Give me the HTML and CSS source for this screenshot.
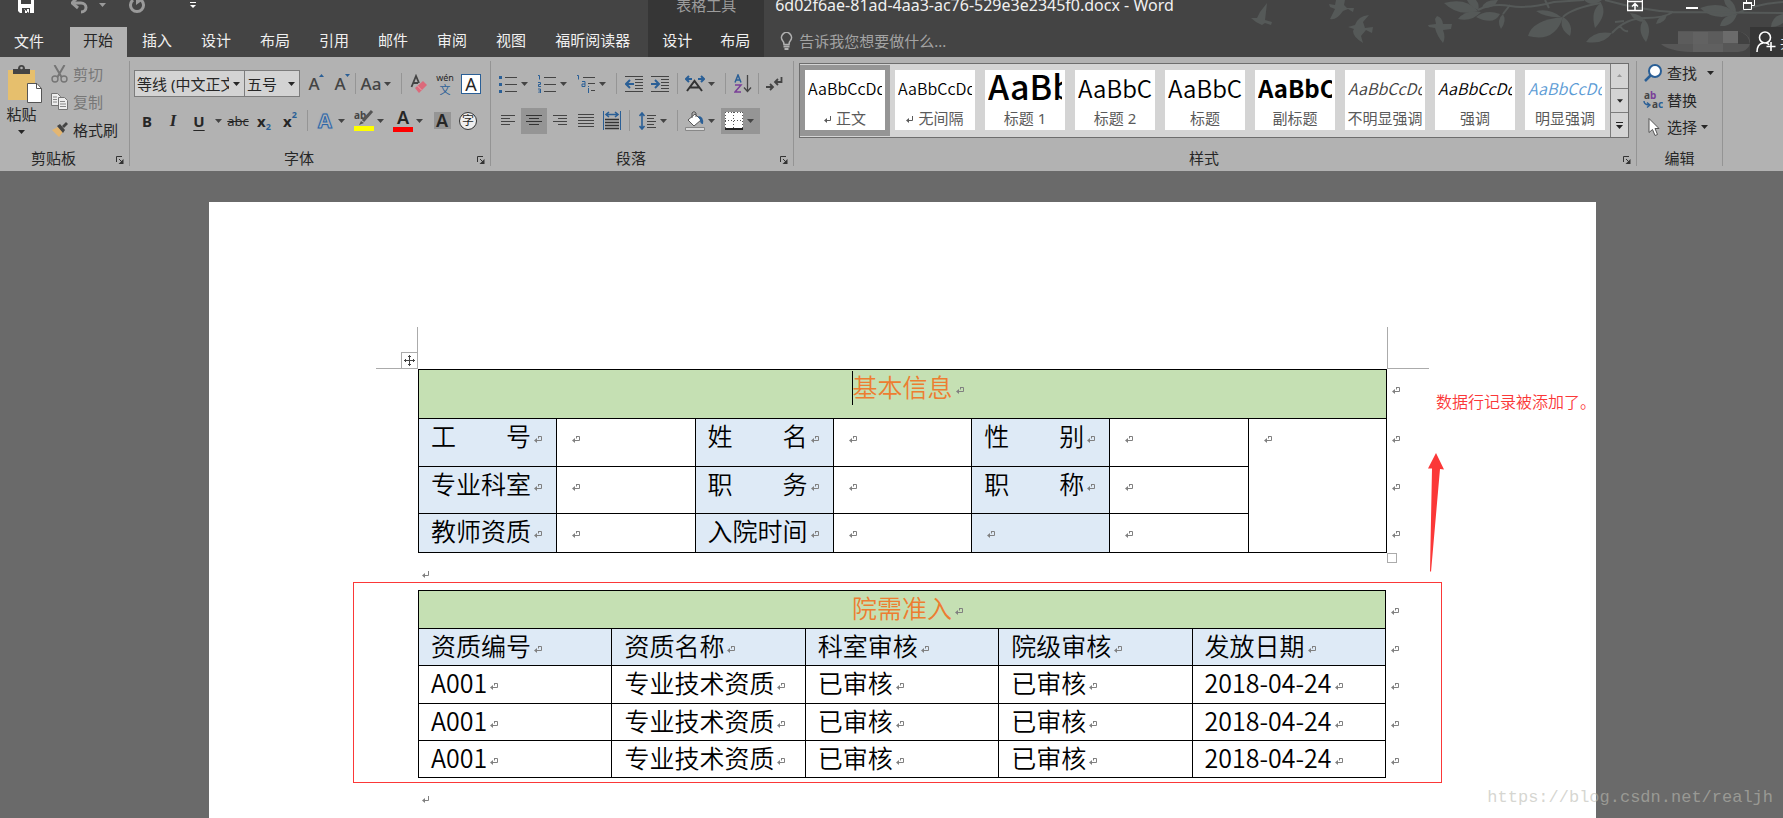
FILE: index.html
```
<!DOCTYPE html>
<html lang="zh-CN">
<head>
<meta charset="utf-8">
<title>6d02f6ae-81ad-4aa3-ac76-529e3e2345f0.docx - Word</title>
<link rel="stylesheet" href="styles.css">
</head>
<body>
<svg class="sprite" aria-hidden="true">
  <symbol id="caret" viewBox="0 0 7 4"><path d="M0 0h7L3.500 4z" fill="currentColor"/></symbol>
  <symbol id="launcher" viewBox="0 0 8 8"><path d="M.5 6V.5H6" fill="none" stroke="#333"/><path d="M3 3l3 3" stroke="#333"/><path d="M7.500 3v5h-5z" fill="#333"/></symbol>
  <symbol id="cellmark" viewBox="0 0 8 8"><path d="M4 .5h3.500v4H2M4.500 .5v2" fill="none" stroke="#808080"/><path d="M0 4.500L3 2v5z" fill="#808080"/></symbol>
  <symbol id="paramark" viewBox="0 0 8 8"><path d="M6.500 0v4.500H2" fill="none" stroke="currentColor"/><path d="M0 4.500L3 2v5z" fill="currentColor"/></symbol>
</svg>

<header class="topbar">
  <svg class="foliage" viewBox="0 0 563 57" aria-hidden="true">
    <g class="leaf">
      <path d="M47 3L40 12 37 18 31 18 36 22 42 25 45 23 51 25 52 22 45 20z"/>
      <path d="M116 0L115 5 109 4 110 7 115 9 110 19Q116 21 123 11L128 9 133 12 134 8 127 8 124 5 125 0z"/>
      <path d="M149 15Q138 16 135 25L128 27 134 29 133 31Q133 37 143 43L141 36 146 30 152 33 153 27 145 28 143 22z"/>
      <path d="M217 16L215 19 216 24 208 25 209 27 215 28Q217 36 223 43 226 38 223 30L231 29 232 24 223 24Q222 17 217 16z"/>
      <path d="M224 3Q246 -3 258 11 238 17 224 3z"/><path d="M238 19Q246 9 261 12 252 22 238 19z"/>
      <path d="M247 0L256 0Q260 5 258 10 250 7 247 0z"/><path d="M262 8Q264 0 276 0H278Q274 9 262 8z"/>
      <path d="M256 17Q266 9 280 14 274 26 256 17z"/><path d="M281 29Q276 20 283 14 287 21 281 29z"/>
      <path d="M308 36Q312 20 343 17 335 43 308 36z"/><path d="M350 36Q338 28 343 17 354 24 350 36z"/>
      <path d="M316 11Q330 8 341 17 326 18 316 11z"/><path d="M375 28Q370 10 381 3 388 14 375 28z"/>
      <path d="M364 0H382Q372 8 364 0z"/><path d="M366 42Q374 30 392 33 384 45 366 42z"/>
      <path d="M426 42Q416 30 424 19 433 28 426 42z"/><path d="M410 13Q422 14 425 22 414 22 410 13z"/>
      <path d="M436 24Q438 15 447 15 445 23 436 24z"/><path d="M480 8Q502 0 517 14 494 22 480 8z"/>
      <path d="M500 26Q502 15 517 14 513 27 500 26z"/><path d="M504 0H510Q516 4 516 13 505 8 504 0z"/>
      <path d="M551 27Q552 16 563 14V23Q558 27 551 27z"/>
    </g>
    <path class="twig" d="M258 10Q272 3 290 6T334 2L364 0M283 14L290 5M325 0L329 8M343 17Q352 8 381 3M392 33Q406 18 425 18T453 12L563 13M385 0Q420 10 453 12M516 14Q534 4 563 2M395 22L404 21M400 26Q404 32 408 31"/>
  </svg>

  <div class="quick">
    <button class="qa-save" aria-label="保存"><svg width="16" height="14" viewBox="0 0 16 14"><path d="M0 0h16v13H2l-2-2z" fill="#fff"/><path d="M3 0h10v4H3zM4 8h8v5H4z" fill="#444"/><path d="M6 9h1v4h2V9h2v4" fill="#fff"/></svg></button>
    <button class="qa" aria-label="撤消"><svg width="18" height="14" viewBox="0 0 18 14"><path d="M2 3h8a5 4.500 0 0 1 0 9" fill="none" stroke="#9a9a9a" stroke-width="3"/><path d="M6 -2L1 3l6 5" fill="none" stroke="#9a9a9a" stroke-width="3"/></svg></button>
    <button class="qa-caret" aria-label="撤消选项"><svg width="7" height="4"><use href="#caret"/></svg></button>
    <button class="qa" aria-label="重复"><svg width="16" height="14" viewBox="0 0 16 14"><path d="M12 0a6.500 6.500 0 1 1-8 0" fill="none" stroke="#9a9a9a" stroke-width="3"/><path d="M7 0h7L7 5z" fill="#9a9a9a"/></svg></button>
    <button class="qa qa-last" aria-label="自定义快速访问工具栏"><svg width="6" height="8" viewBox="0 0 6 8"><path d="M0 2.500h6" stroke="#fff"/><path d="M0 5h6L3 8z" fill="#fff"/></svg></button>
  </div>
  <nav class="tabs" aria-label="功能区">
    <button class="tab tab-file">文件</button><button class="tab active">开始</button><button class="tab">插入</button><button class="tab">设计</button><button class="tab">布局</button><button class="tab">引用</button><button class="tab">邮件</button><button class="tab">审阅</button><button class="tab">视图</button><button class="tab">福昕阅读器</button>
  </nav>
  <div class="context">
    <div class="context-title">表格工具</div>
    <div class="context-tabs"><button class="tab">设计</button><button class="tab">布局</button></div>
  </div>
  <div class="titlebar">
    <h1>6d02f6ae-81ad-4aa3-ac76-529e3e2345f0.docx - Word</h1>
    <div class="window">
      <button aria-label="功能区显示选项"><svg width="16" height="12" viewBox="0 0 16 12"><path d="M.5 0v10.500h15V0M0 1.500h16M8 10V4M5 6.500l3-3 3 3" fill="none" stroke="#fff" stroke-width="1.500"/></svg></button>
      <button aria-label="最小化"><svg width="12" height="12" viewBox="0 0 12 12"><path d="M0 8h12" stroke="#fff" stroke-width="2"/></svg></button>
      <button aria-label="还原"><svg width="12" height="12" viewBox="0 0 12 12"><path d="M.5 3h8v6.500h-8zM3.500 3V0M9 5.500h2.500V0" fill="none" stroke="#fff"/><path d="M0 3h9" stroke="#fff" stroke-width="2"/></svg></button>
    </div>
  </div>
  <div class="tellbar">
    <label class="tell"><svg width="13" height="18" viewBox="0 0 13 18"><path d="M4 12.500Q4 10 2.500 8.500a5 5 0 1 1 8 0Q9 10 9 12.500z" fill="none" stroke="#b0b0b0" stroke-width="1.600"/><path d="M3.500 14.500h6M4.500 17h4" stroke="#b0b0b0" stroke-width="1.800"/></svg><input type="text" placeholder="告诉我您想要做什么..." aria-label="告诉我您想要做什么"></label>
    <svg class="account" width="89" height="22" viewBox="0 0 89 22" aria-hidden="true"><path d="M0 13h17V0h60q11 3 12 10v3q-2 7-12 8H30Q8 20 0 13z" fill="#575757"/><path d="M17 1h15v12H17zM47 1h15v12H47z" fill="#5c5c5c"/><path d="M32 1h15v12H32z" fill="#626262"/><path d="M62 0h15v12H62z" fill="#6b6b6b"/><path d="M77 0q11 3 12 13H77z" fill="#414141"/><path d="M32 13h30v8H32z" fill="#606060"/></svg>
    <button class="share"><svg width="20" height="22" viewBox="0 0 20 22"><circle cx="9" cy="6.500" r="5.500" fill="none" stroke="#fff" stroke-width="1.600"/><path d="M1 21q0-8 6-9M10 12q2 0 3 2M15 11v9M10.500 15.500h9" fill="none" stroke="#fff" stroke-width="1.600"/></svg>共享</button>
  </div>
</header>

<div class="ribbon">
  <section class="group" aria-label="剪贴板">
    <div class="body clip">
      <button class="paste">
        <svg width="36" height="39" viewBox="0 0 36 39"><path d="M1 5h27v30H1z" fill="#e6bf6d"/><path d="M6 4h5q0-4 3.500-4T18 4h5v5H6z" fill="#444"/><circle cx="14.500" cy="3" r="1.300" fill="#b2b2b2"/><path d="M20.500 18.500H30l4.500 5v14h-14z" fill="#fff" stroke="#555"/><path d="M29.500 18.500v5h5" fill="none" stroke="#555"/></svg>
        <span>粘贴</span><svg width="7" height="4"><use href="#caret"/></svg>
      </button>
      <div class="stack">
        <button class="line" disabled><svg width="17" height="18" viewBox="0 0 17 18"><path d="M3.500 0l7 12M13.500 0l-7 12" stroke="#757575" stroke-width="2"/><circle cx="4" cy="14" r="3" fill="none" stroke="#757575" stroke-width="1.400"/><circle cx="13" cy="14" r="3" fill="none" stroke="#757575" stroke-width="1.400"/></svg>剪切</button>
        <button class="line" disabled><svg width="17" height="18" viewBox="0 0 17 18"><path d="M.5 .5h6l3 3v9h-9z" fill="#eee" stroke="#757575"/><path d="M2 4h4M2 6.500h4M2 9h4" stroke="#888"/><path d="M7.500 4.500h6l3 3v9h-9z" fill="#eee" stroke="#757575"/><path d="M9 8.500h5M9 11h6M9 13.500h6" stroke="#888"/></svg>复制</button>
        <button class="line"><svg width="17" height="16" viewBox="0 0 17 16"><path d="M1 8l6-3 5 5-4 5z" fill="#e3b672"/><path d="M6 4l3-2 5 6-2 3zM11 4l4-4 2 2-4 4z" fill="#444"/></svg>格式刷</button>
      </div>
    </div>
    <footer><span>剪贴板</span><button class="launch" aria-label="剪贴板选项"><svg width="8" height="8"><use href="#launcher"/></svg></button></footer>
  </section>

  <section class="group" aria-label="字体">
    <div class="body rows">
      <div class="row">
        <label class="combo combo-font"><select aria-label="字体"><option>等线 (中文正文)</option></select><svg width="7" height="4"><use href="#caret"/></svg></label>
        <label class="combo combo-size"><select aria-label="字号"><option>五号</option></select><svg width="7" height="4"><use href="#caret"/></svg></label>
        <button class="tool" aria-label="增大字号"><span class="glyph">A</span><svg class="tip" width="5" height="3" viewBox="0 0 5 3"><path d="M0 3h5L2.500 0z" fill="#2a5f96"/></svg></button>
        <button class="tool" aria-label="减小字号"><span class="glyph">A</span><svg class="tip" width="5" height="3" viewBox="0 0 5 3"><path d="M0 0h5L2.500 3z" fill="#2a5f96"/></svg></button>
        <i class="sep tight"></i>
        <button class="tool wide" aria-label="更改大小写"><span class="glyph cell">Aa</span><svg width="7" height="4"><use href="#caret"/></svg></button>
        <i class="sep"></i>
        <button class="tool" aria-label="清除所有格式"><svg width="18" height="20" viewBox="0 0 18 20"><path d="M1.500 13L6 2l3 7M3 9h5" fill="none" stroke="#444" stroke-width="1.800"/><path d="M5 14l8-7 4 4-8 8z" fill="#dc6a7b"/><path d="M7.500 12l4 4" stroke="#f0a0aa"/></svg></button>
        <button class="tool phonetic" aria-label="拼音指南"><span>wén</span><span class="blue">文</span></button>
        <button class="tool" aria-label="字符边框"><span class="boxed">A</span></button>
      </div>
      <div class="row">
        <button class="tool bold">B</button><button class="tool ital">I</button><button class="tool under">U</button><button class="drop" aria-label="下划线选项"><svg width="7" height="4"><use href="#caret"/></svg></button>
        <button class="tool strike">abc</button><button class="tool script">x<sub>2</sub></button><button class="tool script">x<sup>2</sup></button>
        <i class="sep"></i>
        <button class="tool wide" aria-label="文本效果"><span class="cell glow">A</span><svg width="7" height="4"><use href="#caret"/></svg></button>
        <button class="tool wide" aria-label="突出显示"><span class="cell"><svg width="20" height="21" viewBox="0 0 20 21"><text x="0" y="9" class="tiny">ab</text><path d="M18 1L9 11" stroke="#555" stroke-width="3"/><path d="M5 15l2-4 3 2z" fill="#555"/><path d="M0 16h20v5H0z" fill="#ff0"/></svg></span><svg width="7" height="4"><use href="#caret"/></svg></button>
        <button class="tool wide" aria-label="字体颜色"><span class="cell colored">A</span><svg width="7" height="4"><use href="#caret"/></svg></button>
        <button class="tool" aria-label="字符底纹"><span class="shaded">A</span></button>
        <button class="tool" aria-label="带圈字符"><span class="ring">字</span></button>
      </div>
    </div>
    <footer><span>字体</span><button class="launch" aria-label="字体选项"><svg width="8" height="8"><use href="#launcher"/></svg></button></footer>
  </section>

  <section class="group" aria-label="段落">
    <div class="body rows">
      <div class="row">
        <button class="tool wide" aria-label="项目符号"><span class="cell"><svg width="18" height="18" viewBox="0 0 18 18"><path d="M6 2.500h12M6 9.500h12M6 16.500h12" stroke="#444"/><path d="M0 1h3v3H0zM0 8h3v3H0zM0 15h3v3H0z" fill="#2a5f96"/></svg></span><svg width="7" height="4"><use href="#caret"/></svg></button>
        <button class="tool wide" aria-label="编号"><span class="cell"><svg width="18" height="18" viewBox="0 0 18 18"><path d="M6 2.500h12M6 9.500h12M6 16.500h12" stroke="#444"/><path d="M0 .5h1.500v4M0 7.500h2.500v2H.5v2H3M0 14h2.500v4H0M.5 16h2" fill="none" stroke="#2a5f96"/></svg></span><svg width="7" height="4"><use href="#caret"/></svg></button>
        <button class="tool wide" aria-label="多级列表"><span class="cell"><svg width="18" height="18" viewBox="0 0 18 18"><path d="M6 2.500h12M11 8.500h7M14 15.500h4" stroke="#444"/><path d="M0 .5h1.500v4M5 6.500h3v5H5v-2.500h3M11.500 13v5M11.500 11v1" fill="none" stroke="#2a5f96"/></svg></span><svg width="7" height="4"><use href="#caret"/></svg></button>
        <i class="sep"></i>
        <button class="tool" aria-label="减少缩进量"><svg width="18" height="17" viewBox="0 0 18 17"><path d="M0 1.500h18M10 4.500h8M10 7.500h8M10 10.500h8M10 13.500h8M0 16.500h18" stroke="#444"/><path d="M1 9h8M5 5L1 9l4 4" fill="none" stroke="#2a5f96" stroke-width="2"/></svg></button>
        <button class="tool" aria-label="增加缩进量"><svg width="18" height="17" viewBox="0 0 18 17"><path d="M0 1.500h18M10 4.500h8M10 7.500h8M10 10.500h8M10 13.500h8M0 16.500h18" stroke="#444"/><path d="M0 9h7M4 5l4 4-4 4" fill="none" stroke="#2a5f96" stroke-width="2"/></svg></button>
        <i class="sep"></i>
        <button class="tool wide" aria-label="中文版式"><span class="cell"><svg width="20" height="17" viewBox="0 0 20 17"><path d="M1 4h6M4 1L1 4l3 3M13 4h6M16 1l3 3-3 3" fill="none" stroke="#2a5f96" stroke-width="2"/><path d="M2 16L9.500 6 17 16M5 12.500h9" fill="none" stroke="#333" stroke-width="2"/></svg></span><svg width="7" height="4"><use href="#caret"/></svg></button>
        <i class="sep"></i>
        <button class="tool" aria-label="排序"><svg width="18" height="19" viewBox="0 0 18 19"><path d="M1 8.500L4 1l3 7.500M2 6h4" fill="none" stroke="#2a5f96" stroke-width="1.500"/><path d="M1 11h6l-6 7h6" fill="none" stroke="#7a3f98" stroke-width="1.500"/><path d="M13.500 1v16M10 13.500l3.500 4 3.500-4" fill="none" stroke="#444" stroke-width="1.300"/></svg></button>
        <i class="sep tight"></i>
        <button class="tool" aria-label="显示编辑标记"><svg width="17" height="15" viewBox="0 0 17 15"><path d="M15.500 1v5H9M12 3L9 6l3 3M0 11h7M4 8l3 3-3 3" fill="none" stroke="#444" stroke-width="1.800"/></svg></button>
      </div>
      <div class="row">
        <button class="tool" aria-label="左对齐"><svg width="14" height="12" viewBox="0 0 14 12"><path d="M0 .5h14M0 3.500h9M0 6.500h14M0 9.500h9" stroke="#444"/></svg></button>
        <button class="tool on" aria-label="居中"><svg width="16" height="12" viewBox="0 0 16 12"><path d="M0 .5h16M3 3.500h10M0 6.500h16M3 9.500h10" stroke="#333"/></svg></button>
        <button class="tool" aria-label="右对齐"><svg width="14" height="12" viewBox="0 0 14 12"><path d="M0 .5h14M5 3.500h9M0 6.500h14M5 9.500h9" stroke="#444"/></svg></button>
        <button class="tool" aria-label="两端对齐"><svg width="16" height="13" viewBox="0 0 16 13"><path d="M0 .5h16M0 3.500h16M0 6.500h16M0 9.500h16M0 12.500h16" stroke="#444"/></svg></button>
        <button class="tool" aria-label="分散对齐"><svg width="18" height="19" viewBox="0 0 18 19"><path d="M.5 0v19M17.500 0v19" stroke="#2a5f96"/><path d="M3 3.500h12M6 1L3 3.500 6 6M12 1l3 2.500L12 6" fill="none" stroke="#2a5f96" stroke-width="1.600"/><path d="M2 8.500h14M2 11.500h14M2 14.500h14M2 17.500h14" stroke="#333" stroke-width="1.400"/></svg></button>
        <i class="sep"></i>
        <button class="tool wide" aria-label="行距"><span class="cell"><svg width="17" height="18" viewBox="0 0 17 18"><path d="M3 1v16M.5 4L3 1l2.500 3M.5 14L3 17l2.500-3" fill="none" stroke="#2a5f96" stroke-width="1.600"/><path d="M8 3.500h9M8 6.500h7M8 9.500h9M8 12.500h7M8 15.500h9" stroke="#444"/></svg></span><svg width="7" height="4"><use href="#caret"/></svg></button>
        <i class="sep"></i>
        <button class="tool wide" aria-label="底纹"><span class="cell"><svg width="20" height="20" viewBox="0 0 20 20"><path d="M3 9l7-6 6 6-7 6z" fill="#fff" stroke="#555"/><path d="M7 7V2q2-3 4 0v4" fill="none" stroke="#555"/><path d="M13 5q6 0 5 8-3 0-3-4z" fill="#2a5f96"/><path d="M.5 16.500h19v3H.5z" fill="#d9d9d9" stroke="#888"/></svg></span><svg width="7" height="4"><use href="#caret"/></svg></button>
        <button class="tool wide on" aria-label="边框"><span class="cell"><svg width="18" height="18" viewBox="0 0 18 18"><path d="M0 0h18v18H0z" fill="#fff"/><path d="M.5 0v17M8.500 0v17M17.500 0v17M0 .5h18M0 8.500h18" stroke="#555" stroke-dasharray="1 2"/><path d="M0 17h18" stroke="#222" stroke-width="2"/></svg></span><svg width="7" height="4"><use href="#caret"/></svg></button>
      </div>
    </div>
    <footer><span>段落</span><button class="launch" aria-label="段落选项"><svg width="8" height="8"><use href="#launcher"/></svg></button></footer>
  </section>

  <section class="group styles" aria-label="样式">
    <div class="body">
      <div class="gallery">
        <button class="style on"><span class="card"><span class="sample">AaBbCcDd</span><span class="name"><svg width="8" height="8"><use href="#paramark"/></svg>正文</span></span></button>
        <button class="style"><span class="card"><span class="sample">AaBbCcDd</span><span class="name"><svg width="8" height="8"><use href="#paramark"/></svg>无间隔</span></span></button>
        <button class="style"><span class="card"><span class="sample huge">AaBb</span><span class="name">标题 1</span></span></button>
        <button class="style"><span class="card"><span class="sample large">AaBbC</span><span class="name">标题 2</span></span></button>
        <button class="style"><span class="card"><span class="sample large">AaBbC</span><span class="name">标题</span></span></button>
        <button class="style"><span class="card"><span class="sample large heavy">AaBbC</span><span class="name">副标题</span></span></button>
        <button class="style"><span class="card"><span class="sample slant soft">AaBbCcDd</span><span class="name">不明显强调</span></span></button>
        <button class="style"><span class="card"><span class="sample slant">AaBbCcDd</span><span class="name">强调</span></span></button>
        <button class="style"><span class="card"><span class="sample slant accent">AaBbCcDd</span><span class="name">明显强调</span></span></button>
        <div class="scroller">
          <button aria-label="上一行" disabled><svg width="5" height="3" viewBox="0 0 5 3"><path d="M0 3h5L2.500 0z" fill="#999"/></svg></button>
          <button aria-label="下一行"><svg width="6" height="4"><use href="#caret"/></svg></button>
          <button aria-label="其他样式"><svg width="7" height="7" viewBox="0 0 7 7"><path d="M0 .5h7" stroke="#222"/><path d="M0 3h7L3.500 7z" fill="#222"/></svg></button>
        </div>
      </div>
    </div>
    <footer><span>样式</span><button class="launch" aria-label="样式选项"><svg width="8" height="8"><use href="#launcher"/></svg></button></footer>
  </section>

  <section class="group" aria-label="编辑">
    <div class="body editing">
      <button class="line"><svg width="20" height="18" viewBox="0 0 20 18"><circle cx="12" cy="7" r="6" fill="#fff" stroke="#2a5f96" stroke-width="2"/><path d="M7.500 11.500L2 17" stroke="#2a5f96" stroke-width="2.500"/></svg>查找<svg class="after far" width="7" height="4"><use href="#caret"/></svg></button>
      <button class="line"><svg width="20" height="18" viewBox="0 0 20 18"><text x="1" y="8" class="tiny">a<tspan fill="#7a3f98">b</tspan></text><text x="9" y="17" class="tiny">a<tspan fill="#2a5f96">c</tspan></text><path d="M1 10q0 4 6 4M4 11.500l3 2.500-3 2.500" fill="none" stroke="#2a5f96" stroke-width="1.400"/></svg>替换</button>
      <button class="line"><svg width="20" height="18" viewBox="0 0 20 18"><path d="M6 .5v14l3.500-3 2.500 6 2.500-1-2.500-6h4z" fill="#fff" stroke="#555"/></svg>选择<svg class="after" width="7" height="4"><use href="#caret"/></svg></button>
    </div>
    <footer><span>编辑</span></footer>
  </section>
</div>

<main class="desk">
  <article class="page">
    <div class="sheet">
      <i class="corner corner-l"></i><i class="corner corner-r"></i>
      <span class="mover"><svg width="11" height="11" viewBox="0 0 11 11"><path d="M5.500 0v11M0 5.500h11M4 1.500h3M4 9.500h3M1.500 4v3M9.500 4v3" stroke="#444"/></svg></span>
      <div class="first">
        <table class="grid info">
          <colgroup><col><col><col><col><col><col><col><col class="end"></colgroup>
          <tr class="h1"><th colspan="7" class="banner"><i class="cursor"></i>基本信息<svg class="mark hang"><use href="#cellmark"/></svg></th><td class="rowend"><svg class="mark"><use href="#cellmark"/></svg></td></tr>
          <tr class="h2"><th>工　　号<svg class="mark"><use href="#cellmark"/></svg></th><td><svg class="mark"><use href="#cellmark"/></svg></td><th>姓　　名<svg class="mark"><use href="#cellmark"/></svg></th><td><svg class="mark"><use href="#cellmark"/></svg></td><th>性　　别<svg class="mark"><use href="#cellmark"/></svg></th><td><svg class="mark"><use href="#cellmark"/></svg></td><td rowspan="3"><svg class="mark"><use href="#cellmark"/></svg></td><td class="rowend"><svg class="mark"><use href="#cellmark"/></svg></td></tr>
          <tr class="h3"><th>专业科室<svg class="mark"><use href="#cellmark"/></svg></th><td><svg class="mark"><use href="#cellmark"/></svg></td><th>职　　务<svg class="mark"><use href="#cellmark"/></svg></th><td><svg class="mark"><use href="#cellmark"/></svg></td><th>职　　称<svg class="mark"><use href="#cellmark"/></svg></th><td><svg class="mark"><use href="#cellmark"/></svg></td><td class="rowend"><svg class="mark"><use href="#cellmark"/></svg></td></tr>
          <tr class="h4"><th>教师资质<svg class="mark"><use href="#cellmark"/></svg></th><td><svg class="mark"><use href="#cellmark"/></svg></td><th>入院时间<svg class="mark"><use href="#cellmark"/></svg></th><td><svg class="mark"><use href="#cellmark"/></svg></td><th><svg class="mark"><use href="#cellmark"/></svg></th><td><svg class="mark"><use href="#cellmark"/></svg></td><td class="rowend"><svg class="mark"><use href="#cellmark"/></svg></td></tr>
        </table>
        <i class="sizer"></i>
      </div>
      <p class="para para-a"><svg width="8" height="8"><use href="#paramark"/></svg></p>
      <div class="outlined">
        <table class="grid records">
          <colgroup><col><col><col><col><col><col class="end"></colgroup>
          <tr class="tall"><th colspan="5" class="banner">院需准入<svg class="mark hang"><use href="#cellmark"/></svg></th><td class="rowend"><svg class="mark"><use href="#cellmark"/></svg></td></tr>
          <tr><th>资质编号<svg class="mark"><use href="#cellmark"/></svg></th><th>资质名称<svg class="mark"><use href="#cellmark"/></svg></th><th>科室审核<svg class="mark"><use href="#cellmark"/></svg></th><th>院级审核<svg class="mark"><use href="#cellmark"/></svg></th><th>发放日期<svg class="mark"><use href="#cellmark"/></svg></th><td class="rowend"><svg class="mark"><use href="#cellmark"/></svg></td></tr>
          <tr class="tall"><td>A001<svg class="mark"><use href="#cellmark"/></svg></td><td>专业技术资质<svg class="mark"><use href="#cellmark"/></svg></td><td>已审核<svg class="mark"><use href="#cellmark"/></svg></td><td>已审核<svg class="mark"><use href="#cellmark"/></svg></td><td>2018-04-24<svg class="mark"><use href="#cellmark"/></svg></td><td class="rowend"><svg class="mark"><use href="#cellmark"/></svg></td></tr>
          <tr><td>A001<svg class="mark"><use href="#cellmark"/></svg></td><td>专业技术资质<svg class="mark"><use href="#cellmark"/></svg></td><td>已审核<svg class="mark"><use href="#cellmark"/></svg></td><td>已审核<svg class="mark"><use href="#cellmark"/></svg></td><td>2018-04-24<svg class="mark"><use href="#cellmark"/></svg></td><td class="rowend"><svg class="mark"><use href="#cellmark"/></svg></td></tr>
          <tr><td>A001<svg class="mark"><use href="#cellmark"/></svg></td><td>专业技术资质<svg class="mark"><use href="#cellmark"/></svg></td><td>已审核<svg class="mark"><use href="#cellmark"/></svg></td><td>已审核<svg class="mark"><use href="#cellmark"/></svg></td><td>2018-04-24<svg class="mark"><use href="#cellmark"/></svg></td><td class="rowend"><svg class="mark"><use href="#cellmark"/></svg></td></tr>
        </table>
      </div>
      <p class="para para-b"><svg width="8" height="8"><use href="#paramark"/></svg></p>
      <div class="callout">
        <span>数据行记录被添加了。</span>
        <svg width="16" height="119" viewBox="0 0 16 119"><path d="M8 0l8 16.500-4-.5L3 119l-1-1L4 15.500H0z" fill="#fb3838"/></svg>
      </div>
    </div>
  </article>
  <span class="stamp">https://blog.csdn.net/realjh</span>
</main>
</body>
</html>
```
FILE: styles.css
```
* { box-sizing: border-box; }
body {
  margin: 0;
  height: 100vh;
  display: flex;
  flex-direction: column;
  overflow: hidden;
  background: #6a6a6a;
  color: #262626;
  font: 15px/20px "Noto Sans", "Noto Sans CJK SC", sans-serif;
}
button, input, select { font: inherit; color: inherit; background: none; border: 0; padding: 0; margin: 0; }
button { display: flex; align-items: center; justify-content: center; white-space: nowrap; }
svg { flex: none; display: block; }
.sprite { position: absolute; width: 0; height: 0; }

/* title bar and tabs */
.topbar {
  position: relative;
  display: grid;
  grid-template: 27px 30px / auto auto 1fr;
  background: #444;
  color: #f0f0f0;
}
.foliage { position: absolute; right: 0; top: 0; width: 563px; height: 57px; }
.leaf { fill: #555958; }
.twig { fill: none; stroke: #555958; stroke-width: 2; }
.quick { grid-area: 1 / 1; display: flex; align-items: flex-start; }
.quick button { height: 14px; align-items: flex-start; }
.qa-save { width: 52px; }
.qa { width: 30px; margin-left: 13px; }
.qa.qa-last { margin-left: 26px; }
.quick .qa-caret { width: 14px; align-items: center; height: 9px; color: #9a9a9a; }
.tabs { grid-area: 2 / 1; display: flex; padding-right: 4px; }
.tab { padding: 0 14px 4px 15px; }
.tab-file { width: 70px; padding: 0 26px 2px 14px; }
.tab.active { padding-left: 13px; background: #b2b2b2; color: #262626; }
.context { grid-area: 1 / 2 / 3 / 3; display: grid; grid-template-rows: 27px 30px; background: #363636; }
.context-title { color: #9c9c9c; text-align: center; line-height: 10px; }
.context-tabs { display: flex; }
.context-tabs .tab { padding: 0 14px 4px; }
.titlebar { position: relative; grid-area: 1 / 3; display: flex; justify-content: space-between; padding: 0 6px 0 11px; }
.titlebar h1 { margin: 0; font-size: 16px; font-weight: 400; line-height: 10px; white-space: nowrap; }
.window { display: flex; }
.window button { width: 57px; height: 12px; }
.tellbar { position: relative; grid-area: 2 / 3; display: flex; align-items: stretch; padding-left: 16px; }
.tell { display: flex; align-items: center; gap: 6px; margin-right: auto; padding-bottom: 2px; }
.tell input { width: 240px; }
.tell input::placeholder { color: #a3a3a3; opacity: 1; }
.account { align-self: center; }
.share { width: 33px; gap: 4px; padding-left: 6px; justify-content: flex-start; overflow: hidden; background: #363636; }

/* ribbon */
.ribbon { display: flex; padding: 4px 60px 5px 0; background: #b2b2b2; }
.group { display: flex; flex-direction: column; height: 105px; border-right: 1px solid #949494; }
.body { flex: 1; }
.group footer { position: relative; text-align: center; line-height: 15px; padding-right: 22px; }
.group footer span { display: inline-block; }
.launch { position: absolute; right: 5px; bottom: 2px; }
.clip { display: flex; width: 129px; }
.paste { width: 48px; flex-direction: column; justify-content: flex-start; padding: 4px 5px 0 0; }
.paste > svg:first-child { margin-left: 6px; }
.paste span { line-height: 20px; }
.paste svg:last-child { margin-top: 6px; }
.line { display: flex; justify-content: flex-start; gap: 5px; height: 28px; padding-bottom: 2px; }
.line:disabled { color: #777; }
.stack { padding-left: 3px; }
.rows { padding: 4px 6px 0 4px; }
.row { display: flex; align-items: center; height: 37px; }
.tool { position: relative; width: 26px; height: 26px; }
.tool.wide { width: 39px; padding-right: 6px; justify-content: space-between; }
.tool .cell { width: 26px; display: flex; justify-content: center; }
.tool svg, .drop { color: #444; }
.drop { width: 13px; height: 26px; }
.on { background: #959595; }
.sep { width: 1px; height: 21px; margin: 0 4px; background: #959595; }
.sep.tight { margin: 0 2px; }
.combo { position: relative; height: 27px; border: 1px solid #7c7c7c; background: #d3d3d3; }
.combo-font { width: 111px; }
.combo-size { width: 56px; margin: 0 1px 0 -1px; }
.combo select { appearance: none; width: 100%; height: 25px; padding: 0 15px 0 2px; overflow: hidden; }
.combo svg { position: absolute; right: 4px; top: 11px; }
.glyph { font-size: 17px; font-weight: 500; color: #444; }
.tip { position: absolute; right: 3px; top: 3px; }
.phonetic { flex-direction: column; font-size: 9px; line-height: 11px; }
.blue { color: #2a5f96; font-size: 11px; line-height: 13px; }
.boxed { width: 20px; line-height: 18px; border: 1px solid #2a5f96; background: #fff; font-size: 18px; text-align: center; }
.bold { font-weight: 700; }
.ital { font: italic 700 17px "Liberation Serif", serif; }
.under { font-weight: 700; text-decoration: underline; text-underline-offset: 3px; }
.strike { font-size: 13px; text-decoration: line-through; }
.script { font-weight: 700; }
.script sub, .script sup { font-size: 9px; line-height: 9px; color: #2a5f96; }
.script sub { align-self: flex-end; margin-bottom: 3px; }
.script sup { align-self: flex-start; margin-top: 2px; }
.glow { color: #b2b2b2; font-size: 20px; font-weight: 700; -webkit-text-stroke: 1px #2d66a8; text-shadow: 0 0 2px #5b93cf; }
.colored { font-size: 18px; font-weight: 600; line-height: 17px; }
.colored::after { content: ""; position: absolute; left: 3px; bottom: 2px; width: 20px; height: 5px; background: #f00; }
.wide .colored { padding-bottom: 6px; }
.shaded { width: 17px; line-height: 17px; background: #959595; font-size: 18px; font-weight: 600; }
.ring { width: 18px; height: 18px; border: 1px solid #333; border-radius: 50%; background: #eee; font-size: 12px; line-height: 15px; }
.tiny { font: 700 10px "Noto Sans", sans-serif; fill: #444; }

/* style gallery */
.styles { flex: 1; min-width: 0; }
.gallery { display: flex; align-items: center; height: 75px; margin: 2px 7px 0 5px; border: 1px solid #6d6d6d; background: #d4d4d4; overflow: hidden; }
.style { flex: 1; min-width: 0; height: 71px; padding: 5px 5px 6px; }
.card { flex: 1; min-width: 0; height: 60px; padding: 0 3px; background: #fff; overflow: hidden; }
.sample { display: block; height: 38px; overflow: hidden; text-align: left; color: #000; font: 350 16px/36px "Noto Sans CJK SC", sans-serif; }
.large { font-size: 24px; }
.huge { font-size: 34px; font-weight: 500; line-height: 32px; }
.heavy { font-weight: 700; }
.slant { font-style: italic; }
.soft { color: #404040; }
.accent { color: #5b9bd5; }
.name { display: flex; align-items: center; justify-content: center; gap: 4px; line-height: 20px; color: #5a5a5a; }
.name svg { margin-top: 4px; }
.scroller { align-self: stretch; width: 18px; display: flex; flex-direction: column; border-left: 1px solid #7c7c7c; }
.scroller button { flex: 1; }
.scroller button + button { border-top: 1px solid #7c7c7c; }
.editing { width: 85px; padding-left: 6px; }
.editing .line { height: 27px; gap: 4px; padding-bottom: 3px; }
.editing + footer { padding-right: 0; }
.after.far { margin-left: 6px; }

/* document */
.desk { position: relative; flex: 1; min-height: 0; display: flex; padding: 31px 187px 0 209px; }
.page { flex: 1; padding: 167px 209px 0; background: #fff; }
.sheet { position: relative; color: #000; }
.corner { position: absolute; top: -42px; width: 42px; height: 42px; border-bottom: 1px solid #ababab; }
.corner-l { right: 100%; border-right: 1px solid #ababab; }
.corner-r { left: 100%; border-left: 1px solid #ababab; }
.mover { position: absolute; right: 100%; top: -17px; padding: 2px; border: 1px solid #ababab; background: #fff; }
.first { position: relative; margin-right: -24px; }
.sizer { position: absolute; right: 14px; top: 100%; width: 10px; height: 10px; border: 1px solid #ababab; background: #fff; }
.grid { width: 100%; table-layout: fixed; border-collapse: collapse; font: 350 25px/32px "Noto Sans CJK SC", sans-serif; }
.grid td, .grid th { padding: 0 0 0 12px; border: 1px solid #000; text-align: left; vertical-align: top; font-weight: 350; white-space: nowrap; }
.grid th { background: #deeaf6; }
.grid .banner { padding: 0; background: #c5e0b3; color: #ed7d31; text-align: center; }
.grid .rowend { padding: 0 0 0 5px; border: 0; }
.end { width: 24px; }
.h1 { height: 49px; }
.h2 { height: 48px; }
.h3 { height: 47px; }
.h4 { height: 39px; }
.records tr { height: 37px; }
.records .tall { height: 38px; }
.mark { display: inline-block; width: 8px; height: 8px; margin-left: 3px; vertical-align: 2px; }
.rowend .mark { margin-left: 0; }
.mark.hang { margin-right: -11px; }
.cursor { display: inline-block; width: 1px; height: 34px; margin: 1px -1px -3px 0; background: #000; vertical-align: top; }
.para { margin: 0; padding-left: 4px; height: 29px; color: #808080; }
.para-a { padding-top: 18px; }
.para-b { padding-top: 13px; }
.outlined { margin: 0 -55px 0 -65px; padding: 7px 31px 4px 64px; border: 1px solid #fb3838; }
.callout { position: absolute; left: calc(100% + 49px); top: 22px; color: #fb3838; white-space: nowrap; font: 350 16px/20px "Noto Sans CJK SC", sans-serif; }
.callout svg { margin: 42px 0 0 -8px; }
.stamp { position: absolute; right: 10px; bottom: 8px; color: rgba(186, 186, 178, .6); font: 17px/24px "Liberation Mono", monospace; }
```
